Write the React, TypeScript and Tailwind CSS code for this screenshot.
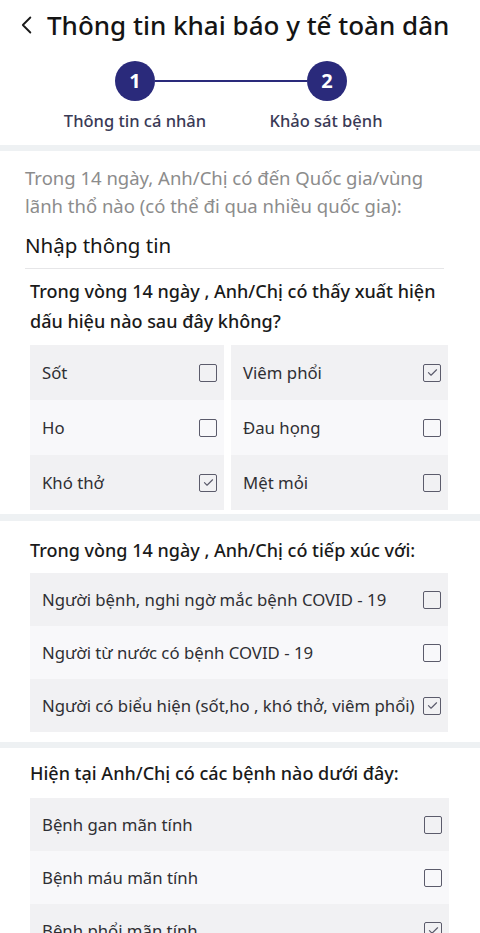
import React from "react";

type Item = { label: string; checked: boolean };

const Checkbox = ({ checked }: { checked: boolean }) => (
  <div className="w-[18px] h-[18px] shrink-0 border-[1.5px] border-[#5b5b6b] rounded-[2px] flex items-center justify-center">
    {checked && (
      <svg viewBox="0 0 16 16" width="13" height="13" fill="none">
        <path d="M3 8.2l3.2 3.2L13 4.6" stroke="#5b5b6b" strokeWidth="1.4" strokeLinecap="round" strokeLinejoin="round" />
      </svg>
    )}
  </div>
);

const Row = ({ item, index, tall }: { item: Item; index: number; tall?: boolean }) => (
  <div
    className={`flex items-center justify-between pl-[12px] pr-[7px] ${tall ? "h-[55px]" : "h-[53px]"} ${
      index % 2 === 0 ? "bg-[#f1f1f3]" : "bg-[#f8f8fa]"
    }`}
  >
    <span className="text-[16.75px] text-[#2f2f33]">{item.label}</span>
    <Checkbox checked={item.checked} />
  </div>
);

const symptomsLeft: Item[] = [
  { label: "Sốt", checked: false },
  { label: "Ho", checked: false },
  { label: "Khó thở", checked: true },
];

const symptomsRight: Item[] = [
  { label: "Viêm phổi", checked: true },
  { label: "Đau họng", checked: false },
  { label: "Mệt mỏi", checked: false },
];

const contacts: Item[] = [
  { label: "Người bệnh, nghi ngờ mắc bệnh COVID - 19", checked: false },
  { label: "Người từ nước có bệnh COVID - 19", checked: false },
  { label: "Người có biểu hiện (sốt,ho , khó thở, viêm phổi)", checked: true },
];

const diseases: Item[] = [
  { label: "Bệnh gan mãn tính", checked: false },
  { label: "Bệnh máu mãn tính", checked: false },
  { label: "Bệnh phổi mãn tính", checked: true },
];

export default function App() {
  return (
    <div className="w-[480px] h-[933px] overflow-hidden bg-white font-['Noto_Sans',sans-serif]">
      {/* HEADER */}
      <div className="flex items-center pl-[20px] pt-[7px]">
        <svg viewBox="0 0 16 24" width="14" height="20" fill="none">
          <path d="M12 3L3 12l9 9" stroke="#1a1a1a" strokeWidth="2.2" strokeLinecap="round" strokeLinejoin="round" />
        </svg>
        <h1 className="ml-[13px] text-[26px] leading-[36px] font-medium text-[#141414]">
          Thông tin khai báo y tế toàn dân
        </h1>
      </div>

      {/* STEPPER */}
      <div className="flex items-center pl-[115px] mt-[18px]">
        <div className="w-10 h-10 rounded-full bg-[#2a2a7b] text-white text-[20px] font-bold flex items-center justify-center">1</div>
        <div className="w-[152px] h-[2px] bg-[#2a2a7b]" />
        <div className="w-10 h-10 rounded-full bg-[#2a2a7b] text-white text-[20px] font-bold flex items-center justify-center">2</div>
      </div>
      <div className="flex pl-[55px] gap-[31px] mt-[8px] text-[16.5px] leading-[24px] text-[#3a3a56] font-medium">
        <div className="w-[160px] text-center">Thông tin cá nhân</div>
        <div className="w-[160px] text-center">Khảo sát bệnh</div>
      </div>

      <div className="mt-[12px] h-[6px] bg-[#eef1f3]" />

      {/* COUNTRY */}
      <div className="pl-[25px] pr-[15px] pt-[13px]">
        <p className="text-[18.5px] leading-[28px] text-[#8c8c8c]">
          Trong 14 ngày, Anh/Chị có đến Quốc gia/vùng lãnh thổ nào (có thể đi qua nhiều quốc gia):
        </p>
        <div className="mt-[11px] pb-[9px] mr-[21px] border-b border-[#e6e6e8] text-[20.5px] leading-[28px] text-[#161616]">
          Nhập thông tin
        </div>
      </div>

      {/* SYMPTOMS */}
      <div className="px-[30px] pt-[7px]">
        <h2 className="text-[18px] leading-[30px] font-medium text-[#1a1a1a]">
          Trong vòng 14 ngày , Anh/Chị có thấy xuất hiện dấu hiệu nào sau đây không?
        </h2>
        <div className="grid grid-cols-[194px_217px] gap-x-[7px] mt-[9px]">
          <div>
            {symptomsLeft.map((item, i) => (
              <Row key={item.label} item={item} index={i} tall />
            ))}
          </div>
          <div>
            {symptomsRight.map((item, i) => (
              <Row key={item.label} item={item} index={i} tall />
            ))}
          </div>
        </div>
      </div>
      <div className="mt-[4px] h-[7px] bg-[#eef1f3]" />

      {/* CONTACTS */}
      <div className="px-[30px] pt-[14px]">
        <h2 className="text-[18px] leading-[30px] font-medium text-[#1a1a1a]">
          Trong vòng 14 ngày , Anh/Chị có tiếp xúc với:
        </h2>
        <div className="mt-[8px] w-[418px]">
          {contacts.map((item, i) => (
            <Row key={item.label} item={item} index={i} />
          ))}
        </div>
      </div>
      <div className="mt-[10px] h-[6px] bg-[#eef1f3]" />

      {/* DISEASES */}
      <div className="px-[30px] pt-[10px]">
        <h2 className="text-[18px] leading-[30px] font-medium text-[#1a1a1a]">
          Hiện tại Anh/Chị có các bệnh nào dưới đây:
        </h2>
        <div className="mt-[10px] w-[419px]">
          {diseases.map((item, i) => (
            <Row key={item.label} item={item} index={i} />
          ))}
        </div>
      </div>
    </div>
  );
}
